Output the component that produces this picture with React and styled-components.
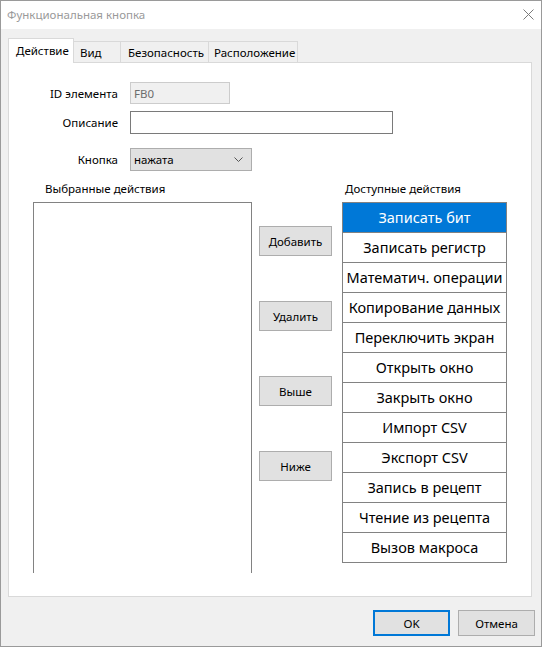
import React from "react";
import styled, { createGlobalStyle } from "styled-components";

const GlobalStyle = createGlobalStyle`
  html, body { margin: 0; padding: 0; background: #ffffff; }
  body { font-family: "Noto Sans", "Open Sans", sans-serif; font-size: 11.5px; color: #000; }
  * { box-sizing: border-box; }
`;

const UI_FONT = "11.5px";

const Window = styled.div`
  width: 542px;
  height: 647px;
  border: 1px solid #9a9a9a;
  display: flex;
  flex-direction: column;
  background: #f0f0f0;
`;

const TitleBar = styled.div`
  height: 28px;
  flex: none;
  background: #ffffff;
  display: flex;
  align-items: center;
  justify-content: space-between;
  padding: 0 7px 1px 6px;
`;

const TitleText = styled.span`
  color: #9a9a9a;
  font-size: ${UI_FONT};
`;

const CloseGlyph = styled.svg`
  width: 11px;
  height: 11px;
  display: block;
`;

const Body = styled.div`
  flex: 1;
  display: flex;
  flex-direction: column;
  padding: 9px 0 10px 7px;
`;

const TabStrip = styled.div`
  display: flex;
  align-items: flex-end;
  height: 25px;
  margin-bottom: -1px;
  position: relative;
  z-index: 1;
`;

const Tab = styled.div`
  width: ${(p) => p.$w}px;
  height: ${(p) => (p.$active ? 25 : 21)}px;
  margin-bottom: ${(p) => (p.$active ? 0 : 1)}px;
  margin-left: ${(p) => (p.$first ? 0 : -1)}px;
  background: ${(p) => (p.$active ? "#ffffff" : "#f0f0f0")};
  border: 1px solid #d9d9d9;
  border-bottom: none;
  display: flex;
  align-items: center;
  padding: ${(p) => (p.$active ? "0 0 1px 7px" : `1px 0 0 ${p.$pl}px`)};
  font-size: ${UI_FONT};
  white-space: nowrap;
`;

const Panel = styled.div`
  width: 524px;
  height: 535px;
  background: #ffffff;
  border: 1px solid #d9d9d9;
  padding: 19px 0 0 0;
  display: flex;
  flex-direction: column;
`;

const FormRow = styled.div`
  display: flex;
  align-items: center;
  margin-top: ${(p) => p.$gap || 0}px;
`;

const FieldLabel = styled.div`
  width: 109px;
  text-align: right;
  margin-right: 12px;
  font-size: ${UI_FONT};
`;

const ReadOnlyBox = styled.div`
  width: 100px;
  height: 22px;
  border: 1px solid #cccccc;
  background: #f0f0f0;
  color: #6d6d6d;
  padding: 0 3px;
  display: flex;
  align-items: center;
  font-size: ${UI_FONT};
`;

const TextBox = styled.div`
  width: 263px;
  height: 23px;
  border: 1px solid #7a7a7a;
  background: #ffffff;
`;

const Select = styled.div`
  width: 122px;
  height: 23px;
  border: 1px solid #adadad;
  background: #e1e1e1;
  display: flex;
  align-items: center;
  justify-content: space-between;
  padding: 0 8px 0 3px;
  font-size: ${UI_FONT};
`;

const Columns = styled.div`
  display: flex;
  align-items: flex-start;
  margin: 10px 0 0 24px;
`;

const Column = styled.div`
  display: flex;
  flex-direction: column;
  width: ${(p) => p.$w}px;
  margin-left: ${(p) => p.$ml || 0}px;
`;

const Caption = styled.div`
  height: 16px;
  line-height: 16px;
  margin-bottom: 5px;
  padding-left: ${(p) => p.$indent}px;
  font-size: ${UI_FONT};
  white-space: nowrap;
`;

const SelectedList = styled.div`
  height: 371px;
  border: 1px solid #828282;
  border-bottom: none;
  background: #ffffff;
`;

const ButtonStack = styled.div`
  display: flex;
  flex-direction: column;
  gap: 45px;
  padding-top: 45px;
`;

const Button = styled.div`
  width: ${(p) => p.$w || 73}px;
  height: ${(p) => p.$h || 30}px;
  background: #e1e1e1;
  border: ${(p) => (p.$default ? "2px solid #0078d7" : "1px solid #adadad")};
  display: flex;
  align-items: center;
  justify-content: center;
  font-size: ${UI_FONT};
`;

const ActionList = styled.div`
  display: flex;
  flex-direction: column;
`;

const ActionItem = styled.div`
  height: 31px;
  margin-top: ${(p) => (p.$first ? 0 : -1)}px;
  border: 1px solid #828282;
  background: ${(p) => (p.$selected ? "#0078d7" : "#ffffff")};
  color: ${(p) => (p.$selected ? "#ffffff" : "#000000")};
  display: flex;
  align-items: center;
  justify-content: center;
  padding-bottom: 2px;
  font-size: 14.5px;
  white-space: nowrap;
  position: relative;
  z-index: ${(p) => (p.$selected ? 0 : 1)};
`;

const Footer = styled.div`
  display: flex;
  justify-content: flex-end;
  gap: 8px;
  margin-top: 13px;
  padding-right: 6px;
`;

const tabs = [
  { label: "Действие", w: 66, pl: 7 },
  { label: "Вид", w: 48, pl: 6 },
  { label: "Безопасность", w: 89, pl: 7 },
  { label: "Расположение", w: 90, pl: 5 },
];

const actions = [
  "Записать бит",
  "Записать регистр",
  "Математич. операции",
  "Копирование данных",
  "Переключить экран",
  "Открыть окно",
  "Закрыть окно",
  "Импорт CSV",
  "Экспорт CSV",
  "Запись в рецепт",
  "Чтение из рецепта",
  "Вызов макроса",
];

const moveButtons = ["Добавить", "Удалить", "Выше", "Ниже"];

export default function App() {
  return (
    <>
      <GlobalStyle />
      <Window>
        <TitleBar>
          <TitleText>Функциональная кнопка</TitleText>
          <CloseGlyph viewBox="0 0 11 11">
            <path d="M0.5 0.5 L10.5 10.5 M10.5 0.5 L0.5 10.5" stroke="#7a7a7a" strokeWidth="1" fill="none" />
          </CloseGlyph>
        </TitleBar>
        <Body>
          <TabStrip>
            {tabs.map((t, i) => (
              <Tab key={t.label} $w={t.w} $pl={t.pl} $active={i === 0} $first={i === 0}>
                {t.label}
              </Tab>
            ))}
          </TabStrip>
          <Panel>
            <FormRow>
              <FieldLabel>ID элемента</FieldLabel>
              <ReadOnlyBox>FB0</ReadOnlyBox>
            </FormRow>
            <FormRow $gap={7}>
              <FieldLabel>Описание</FieldLabel>
              <TextBox />
            </FormRow>
            <FormRow $gap={14}>
              <FieldLabel>Кнопка</FieldLabel>
              <Select>
                <span>нажата</span>
                <svg width="9" height="5" viewBox="0 0 9 5">
                  <path d="M0.5 0.5 L4.5 4.5 L8.5 0.5" stroke="#555" strokeWidth="1" fill="none" />
                </svg>
              </Select>
            </FormRow>
            <Columns>
              <Column $w={219}>
                <Caption $indent={12}>Выбранные действия</Caption>
                <SelectedList />
              </Column>
              <Column $w={73} $ml={7}>
                <ButtonStack>
                  {moveButtons.map((b) => (
                    <Button key={b}>{b}</Button>
                  ))}
                </ButtonStack>
              </Column>
              <Column $w={165} $ml={10}>
                <Caption $indent={3}>Доступные действия</Caption>
                <ActionList>
                  {actions.map((a, i) => (
                    <ActionItem key={a} $first={i === 0} $selected={i === 0}>
                      {a}
                    </ActionItem>
                  ))}
                </ActionList>
              </Column>
            </Columns>
          </Panel>
          <Footer>
            <Button $w={77} $h={26} $default>OK</Button>
            <Button $w={77} $h={26}>Отмена</Button>
          </Footer>
        </Body>
      </Window>
    </>
  );
}
